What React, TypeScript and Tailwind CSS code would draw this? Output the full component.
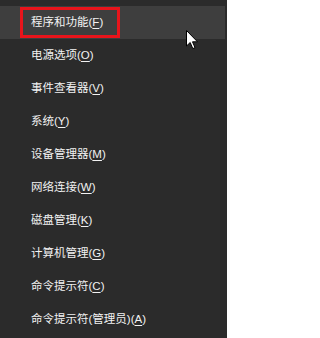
import React from "react";

const items: { label: string; key: string }[] = [
  { label: "程序和功能", key: "F" },
  { label: "电源选项", key: "O" },
  { label: "事件查看器", key: "V" },
  { label: "系统", key: "Y" },
  { label: "设备管理器", key: "M" },
  { label: "网络连接", key: "W" },
  { label: "磁盘管理", key: "K" },
  { label: "计算机管理", key: "G" },
  { label: "命令提示符", key: "C" },
  { label: "命令提示符(管理员)", key: "A" },
];

function Cursor() {
  return (
    <svg
      className="absolute left-[186px] top-[30px]"
      width="13"
      height="20"
      viewBox="0 0 13 20"
    >
      <path
        d="M0.5 0.5 L0.5 16 L4.2 12.5 L6.8 18.6 L9 17.6 L6.5 11.8 L11.5 11.8 Z"
        fill="#ffffff"
        stroke="#000000"
        strokeWidth="1"
        strokeLinejoin="round"
      />
    </svg>
  );
}

export default function App() {
  return (
    <div
      className="relative h-[338px] w-[227px] overflow-hidden bg-[#2b2b2b] pt-[6px] text-[11.5px] text-[#f2f2f2]"
      style={{ fontFamily: '"Liberation Sans", "Noto Sans CJK SC", sans-serif' }}
    >
      {items.map((it, i) => (
        <div
          key={it.label}
          className={
            "relative mr-[2px] flex h-[33px] items-center pl-[31px] " +
            (i === 0 ? "bg-[#3e3e3e]" : "")
          }
        >
          <span className="leading-none">
            {it.label}(<span className="underline underline-offset-2">{it.key}</span>)
          </span>
          {i === 0 && (
            <div className="absolute left-[20px] top-[1px] h-[31px] w-[100px] border-[3px] border-[#e8141b]" />
          )}
        </div>
      ))}
      <Cursor />
    </div>
  );
}
